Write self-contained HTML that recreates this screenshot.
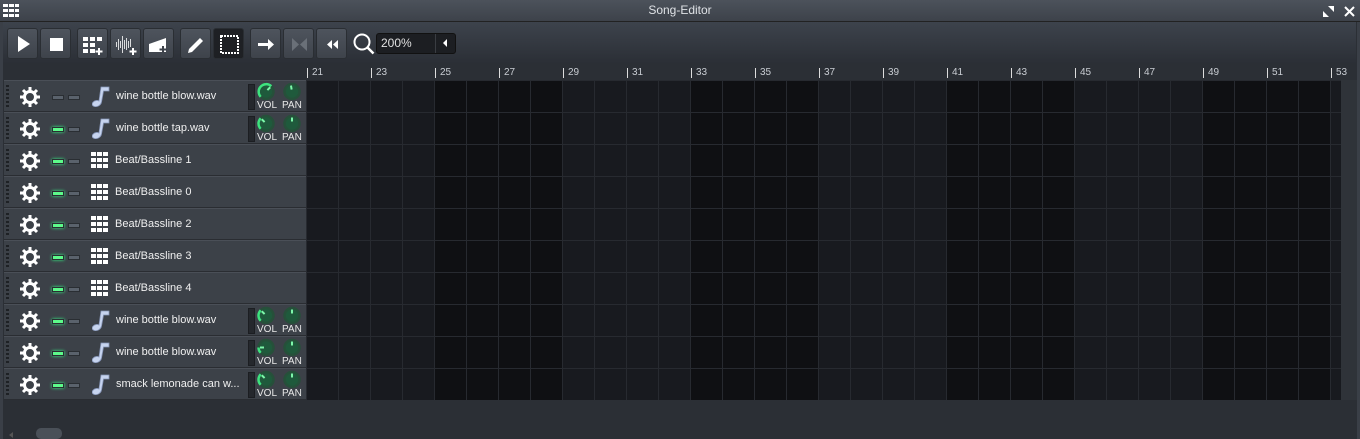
<!DOCTYPE html>
<html><head><style>
*{margin:0;padding:0;box-sizing:border-box}
body{width:1360px;height:439px;background:#2b2f35;font-family:"Liberation Sans",sans-serif;position:relative;overflow:hidden;color:#e0e0e0}
.a{position:absolute}
.title{left:0;top:0;width:1360px;height:22px;background:linear-gradient(#4c525b,#3d424a);border-bottom:1px solid #222}
.tb{left:3px;top:22px;width:1353px;height:41px;background:linear-gradient(#3d434c,#2b2f36)}
.btn{position:absolute;top:28px;width:31px;height:31px;border-radius:3px;background:linear-gradient(#4e545d,#3e434b);border:1px solid #2a2e33}
.btn svg{position:absolute;left:0;top:0}
.ruler{left:306px;top:63px;width:1040px;height:17px;background:#2b2f35}
.rl{position:absolute;top:5px;font-size:10px;color:#c8ccd2;border-left:1px solid #ddd;padding-left:4px;line-height:10px;height:10px}
.row{position:absolute;left:4px;width:302px;height:32px;background:#3c4148;border-bottom:1px solid #2a2d32;border-top:1px solid #4a4f57}
.grip{position:absolute;left:2px;top:4px;width:3px;height:24px;background:repeating-linear-gradient(#1e2125 0 2px,transparent 2px 4px)}
.led{position:absolute;top:14px;width:12px;height:5px;background:#5a626c;border:1px solid #2a2e33}
.led.on{background:#5dfb8a;box-shadow:0 0 3px #3f8}
.nm{position:absolute;left:112px;top:9px;font-size:11px;color:#f0f0f0;white-space:nowrap}
.vb{position:absolute;left:244px;top:3px;width:7px;height:26px;background:#25282d;border:1px solid #1c1e22}
.kl{position:absolute;top:20px;font-size:10px;color:#e8e8e8;line-height:10px}
</style></head><body>
<div class="a title"></div>
<div class="a" style="left:3px;top:4px;width:16px;height:13px;background:repeating-linear-gradient(#fff 0 3px,transparent 3px 5px)"></div>
<div class="a" style="left:3px;top:4px;width:16px;height:13px;background:repeating-linear-gradient(90deg,transparent 0 5px,#4a5058 5px 6px)"></div>
<div class="a" style="left:0;top:3px;width:1360px;text-align:center;font-size:12px;color:#dfe2e6">Song-Editor</div>
<svg class="a" style="left:1322px;top:5px" width="34" height="13"><path d="M1 12V6l6 6z M12 1v6L6 1z" fill="#fff"/><path d="M23 2l9 9M32 2l-9 9" stroke="#fff" stroke-width="2"/></svg>
<div class="a" style="left:0;top:22px;width:3px;height:417px;background:#3a3f47"></div>
<div class="a" style="left:1357px;top:22px;width:3px;height:417px;background:#3a3f47"></div>
<div class="a tb"></div>
<div class="btn" style="left:7px"><svg width="31" height="31"><path d="M10 7l12 8-12 8z" fill="#fff"/></svg></div>
<div class="btn" style="left:40px"><svg width="31" height="31"><rect x="9" y="9" width="13" height="13" fill="#fff"/></svg></div>
<div class="btn" style="left:77px"><svg width="31" height="31"><g fill="#fff"><rect x="5" y="8" width="5" height="4"/><rect x="12" y="8" width="5" height="4"/><rect x="19" y="8" width="5" height="4"/><rect x="5" y="14" width="5" height="4"/><rect x="12" y="14" width="5" height="4"/><rect x="5" y="20" width="5" height="4"/><rect x="12" y="20" width="5" height="4"/></g><path d="M21 19v7M17.5 22.5h7" stroke="#fff" stroke-width="2"/></svg></div>
<div class="btn" style="left:110px"><svg width="31" height="31"><path d="M5.5 13v5M7.5 10v11M9.5 12v7M11.5 7v17M13.5 11v9M15.5 9v12M17.5 12v7M19.5 10v8" stroke="#fff" stroke-width="0.8"/><path d="M22 19v7M18.5 22.5h7" stroke="#fff" stroke-width="2"/></svg></div>
<div class="btn" style="left:143px"><svg width="31" height="31"><path d="M5 15l17-6v14H5z" fill="#fff"/><path d="M19 17v7M15.5 20.5h7" stroke="#3e434b" stroke-width="2"/></svg></div>
<div class="btn" style="left:180px"><svg width="31" height="31"><path d="M8 20l11-11 3 3-11 11-4 1z" fill="#fff"/></svg></div>
<div class="btn" style="left:213px;background:#1e2024"><svg width="31" height="31"><rect x="7" y="7" width="17" height="17" fill="none" stroke="#fff" stroke-width="2" stroke-dasharray="2 1"/></svg></div>
<div class="btn" style="left:250px"><svg width="31" height="31"><path d="M7 14h10v-4l6 5.5-6 5.5v-4H7z" fill="#fff"/></svg></div>
<div class="btn" style="left:283px"><svg width="31" height="31"><path d="M8 9l7 6.5-7 6.5zM23 9l-7 6.5 7 6.5z" fill="#6a7078"/></svg></div>
<div class="btn" style="left:316px"><svg width="31" height="31"><path d="M15 11l-5 4.5 5 4.5zM21 11l-5 4.5 5 4.5z" fill="#fff"/></svg></div>
<svg class="a" style="left:352px;top:32px" width="24" height="24"><circle cx="10" cy="10" r="7.5" fill="none" stroke="#fff" stroke-width="2"/><path d="M15.5 15.5l6 6" stroke="#fff" stroke-width="2.5"/></svg>
<div class="a" style="left:376px;top:33px;width:80px;height:21px;background:#1c1e22;border:1px solid #111;border-radius:3px"></div>
<div class="a" style="left:381px;top:36px;font-size:12px;color:#e0e0e0">200%</div>
<div class="a" style="left:435px;top:34px;width:1px;height:19px;background:#3a3d42"></div>
<svg class="a" style="left:441px;top:38px" width="8" height="10"><path d="M6 1v8L2 5z" fill="#fff"/></svg>
<div class="a ruler">
<div class="rl" style="left:1px">21</div><div class="rl" style="left:65px">23</div><div class="rl" style="left:129px">25</div><div class="rl" style="left:193px">27</div><div class="rl" style="left:257px">29</div><div class="rl" style="left:321px">31</div><div class="rl" style="left:385px">33</div><div class="rl" style="left:449px">35</div><div class="rl" style="left:513px">37</div><div class="rl" style="left:577px">39</div><div class="rl" style="left:641px">41</div><div class="rl" style="left:705px">43</div><div class="rl" style="left:769px">45</div><div class="rl" style="left:833px">47</div><div class="rl" style="left:897px">49</div><div class="rl" style="left:961px">51</div><div class="rl" style="left:1025px">53</div>
</div>
<div class="a" style="left:307px;top:80px;width:1034px;height:320px;background:repeating-linear-gradient(90deg,#181a1f 0 128px,#0f1013 128px 256px)"></div>
<div class="a" style="left:306px;top:80px;width:1035px;height:320px;background:repeating-linear-gradient(90deg,#272a30 0 1px,transparent 1px 32px),repeating-linear-gradient(#272a30 0 1px,transparent 1px 32px)"></div>
<div class="a" style="left:1341px;top:80px;width:16px;height:320px;background:#2f3339"></div>

<div class="a" style="left:36px;top:428px;width:26px;height:11px;border-radius:5px;background:#4a5058"></div>
<svg class="a" style="left:8px;top:432px" width="6" height="6"><path d="M5 0v6L1 3z" fill="#555"/></svg>

<svg width="0" height="0" style="position:absolute"><defs>
<g id="gear"><circle cx="0" cy="0" r="5.5" fill="none" stroke="#fff" stroke-width="3"/><g stroke="#fff" stroke-width="3"><path d="M0-10v4M0 6v4M-10 0h4M6 0h4M-7-7l3 3M4 4l3 3M7-7l-3 3M-4 4l-3 3"/></g></g>
<g id="note"><path d="M9 2h8v4h-5.5l-2 11c-.6 3-3.5 5-6.5 4.6S-.5 19 1 17.2 5.5 15 7 16z" fill="#c7d4ef" stroke="#8796b8" stroke-width="0.8"/></g>
<g id="grid"><g fill="#fff"><rect x="0" y="0" width="5" height="4"/><rect x="6" y="0" width="5" height="4"/><rect x="12" y="0" width="5" height="4"/><rect x="0" y="6" width="5" height="4"/><rect x="6" y="6" width="5" height="4"/><rect x="12" y="6" width="5" height="4"/><rect x="0" y="12" width="5" height="4"/><rect x="6" y="12" width="5" height="4"/><rect x="12" y="12" width="5" height="4"/></g></g>
</defs></svg>

<div id="rows"></div>
<script>
var R=[["wine bottle blow.wav",0,0,1],["wine bottle tap.wav",1,0,2],["Beat/Bassline 1",1,1],["Beat/Bassline 0",1,1],["Beat/Bassline 2",1,1],["Beat/Bassline 3",1,1],["Beat/Bassline 4",1,1],["wine bottle blow.wav",1,0,2],["wine bottle blow.wav",1,0,3],["smack lemonade can w...",1,0,2]];
var h="";
function arc(a0,a1){var r=7.5,p=function(a){a=(a-90)*Math.PI/180;return (r*Math.cos(a)).toFixed(2)+" "+(r*Math.sin(a)).toFixed(2)};return "M"+p(a0)+"A7.5 7.5 0 "+((a1-a0)>180?1:0)+" 1 "+p(a1);}
function ln(a){a=(a-90)*Math.PI/180;return "M"+(2*Math.cos(a)).toFixed(2)+" "+(2*Math.sin(a)).toFixed(2)+"L"+(6*Math.cos(a)).toFixed(2)+" "+(6*Math.sin(a)).toFixed(2);}
R.forEach(function(r,i){
var y=80+i*32;
h+='<div class="row" style="top:'+y+'px"><div class="grip"></div>';
h+='<svg class="a" style="left:16px;top:6px" width="20" height="20"><use href="#gear" transform="translate(10 10)"/></svg>';
h+='<div class="led'+(r[1]?' on':'')+'" style="left:48px"></div><div class="led" style="left:64px"></div>';
if(r[2]) h+='<svg class="a" style="left:87px;top:7px" width="18" height="17"><use href="#grid"/></svg>';
else h+='<svg class="a" style="left:88px;top:4px" width="20" height="24"><use href="#note"/></svg>';
h+='<div class="nm"'+(r[2]?' style="left:111px"':'')+'>'+r[0]+'</div>';
if(!r[2]){
var ve=r[3]==1?45:(r[3]==3?-90:-45);
var pe=i==0?-10:0;
h+='<div class="vb"></div><svg class="a" style="left:251px;top:0px" width="52" height="21">'+
'<g transform="translate(11 10.5)"><circle r="7.5" fill="#1f5a3c" stroke="#26503a" stroke-width="2.5"/><path d="'+arc(-135,ve)+'" fill="none" stroke="#3ee37f" stroke-width="2.5"/><path d="'+ln(ve)+'" stroke="#7df7aa" stroke-width="2"/></g>'+
'<g transform="translate(37 10.5)"><circle r="7.5" fill="#1f5a3c" stroke="#26503a" stroke-width="2.5"/><path d="'+ln(pe)+'" stroke="#7df7aa" stroke-width="2"/></g></svg>'+
'<div class="kl" style="left:253px">VOL</div><div class="kl" style="left:278px">PAN</div>';
}
h+='</div>';});
document.getElementById("rows").innerHTML=h;
</script>
</body></html>
